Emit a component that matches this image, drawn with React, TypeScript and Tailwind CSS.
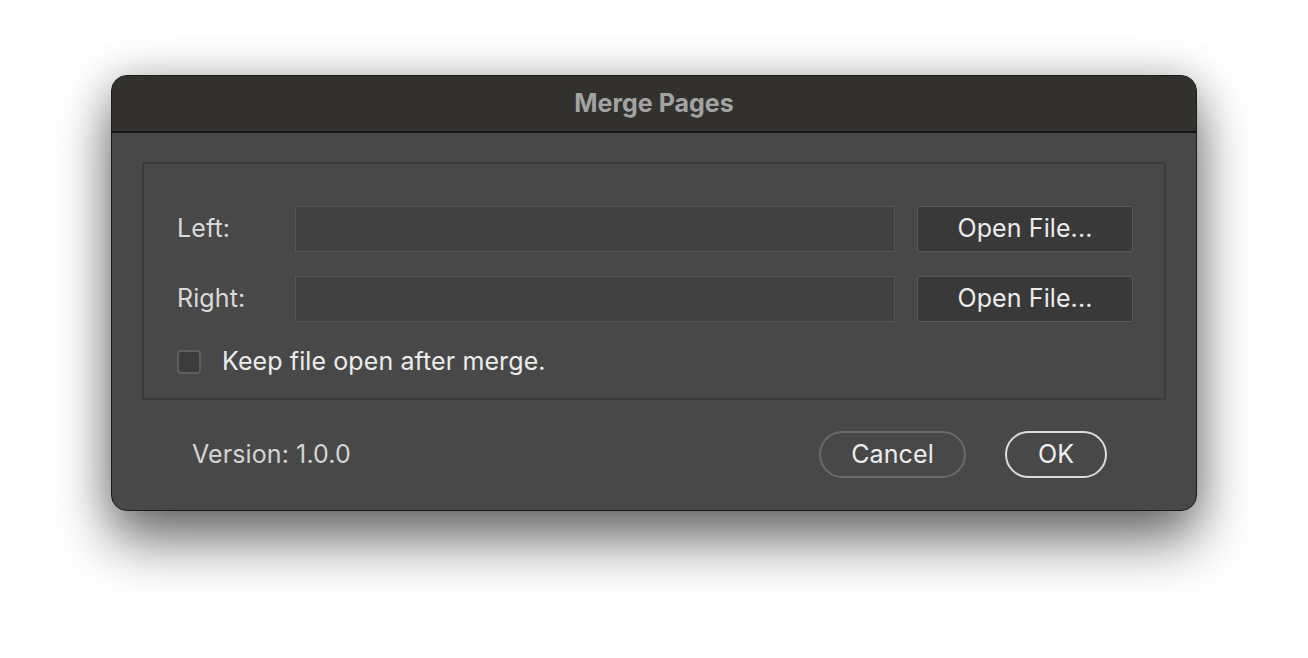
import React from 'react';

const font = { fontFamily: 'Inter, "Noto Sans", sans-serif' };

function FileRow({ label }: { label: string }) {
  return (
    <div className="flex items-center h-[46px]">
      <span className="w-[118px] text-[25px] text-[#d9d9d9] tracking-[0.1px]">{label}</span>
      <div className="w-[600px] h-[46px] bg-[#414141] border border-[#555555]" />
      <button className="ml-[22px] w-[216px] h-[46px] rounded-[3px] bg-[#393939] border border-[#595959] text-[25px] text-[#ececec] tracking-[0.1px]">
        Open File...
      </button>
    </div>
  );
}

export default function App() {
  return (
    <div className="w-[1308px] h-[658px] bg-white flex items-start justify-center pt-[75px]" style={font}>
      <div className="w-[1086px] h-[436px] rounded-[16px] border border-[#1b1b1b] bg-[#484848] overflow-hidden shadow-[0_30px_55px_rgba(0,0,0,0.55),0_0_40px_rgba(0,0,0,0.2)] flex flex-col">
        <div className="h-[57px] bg-[#33312e] border-b-2 border-[#151515] flex items-center justify-center shrink-0">
          <span className="text-[25px] font-bold text-[#a3a3a3]">Merge Pages</span>
        </div>
        <div className="flex-1 px-[30px] pt-[29px] flex flex-col">
          <div className="h-[238px] border-2 border-[#3b3b3b] pl-[33px] pt-[42px] flex flex-col gap-[24px]">
            <FileRow label="Left:" />
            <FileRow label="Right:" />
            <div className="flex items-center -mt-[3px]">
              <div className="w-[24px] h-[24px] rounded-[4px] bg-[#3c3c3c] border-2 border-[#5e5e5e]" />
              <span className="ml-[21px] text-[25px] text-[#ececec] tracking-[0.1px]">Keep file open after merge.</span>
            </div>
          </div>
          <div className="flex items-center mt-[31px] pl-[50px] pr-[59px]">
            <span className="text-[25px] text-[#d4d4d4] tracking-[0.1px]">Version: 1.0.0</span>
            <div className="flex-1" />
            <button className="w-[147px] h-[47px] rounded-full border-2 border-[#6a6a6a] text-[25px] text-[#ececec] tracking-[0.1px]">
              Cancel
            </button>
            <button className="ml-[39px] w-[102px] h-[47px] rounded-full border-2 border-[#dcdcdc] text-[25px] text-[#f0f0f0] tracking-[0.1px]">
              OK
            </button>
          </div>
        </div>
      </div>
    </div>
  );
}
